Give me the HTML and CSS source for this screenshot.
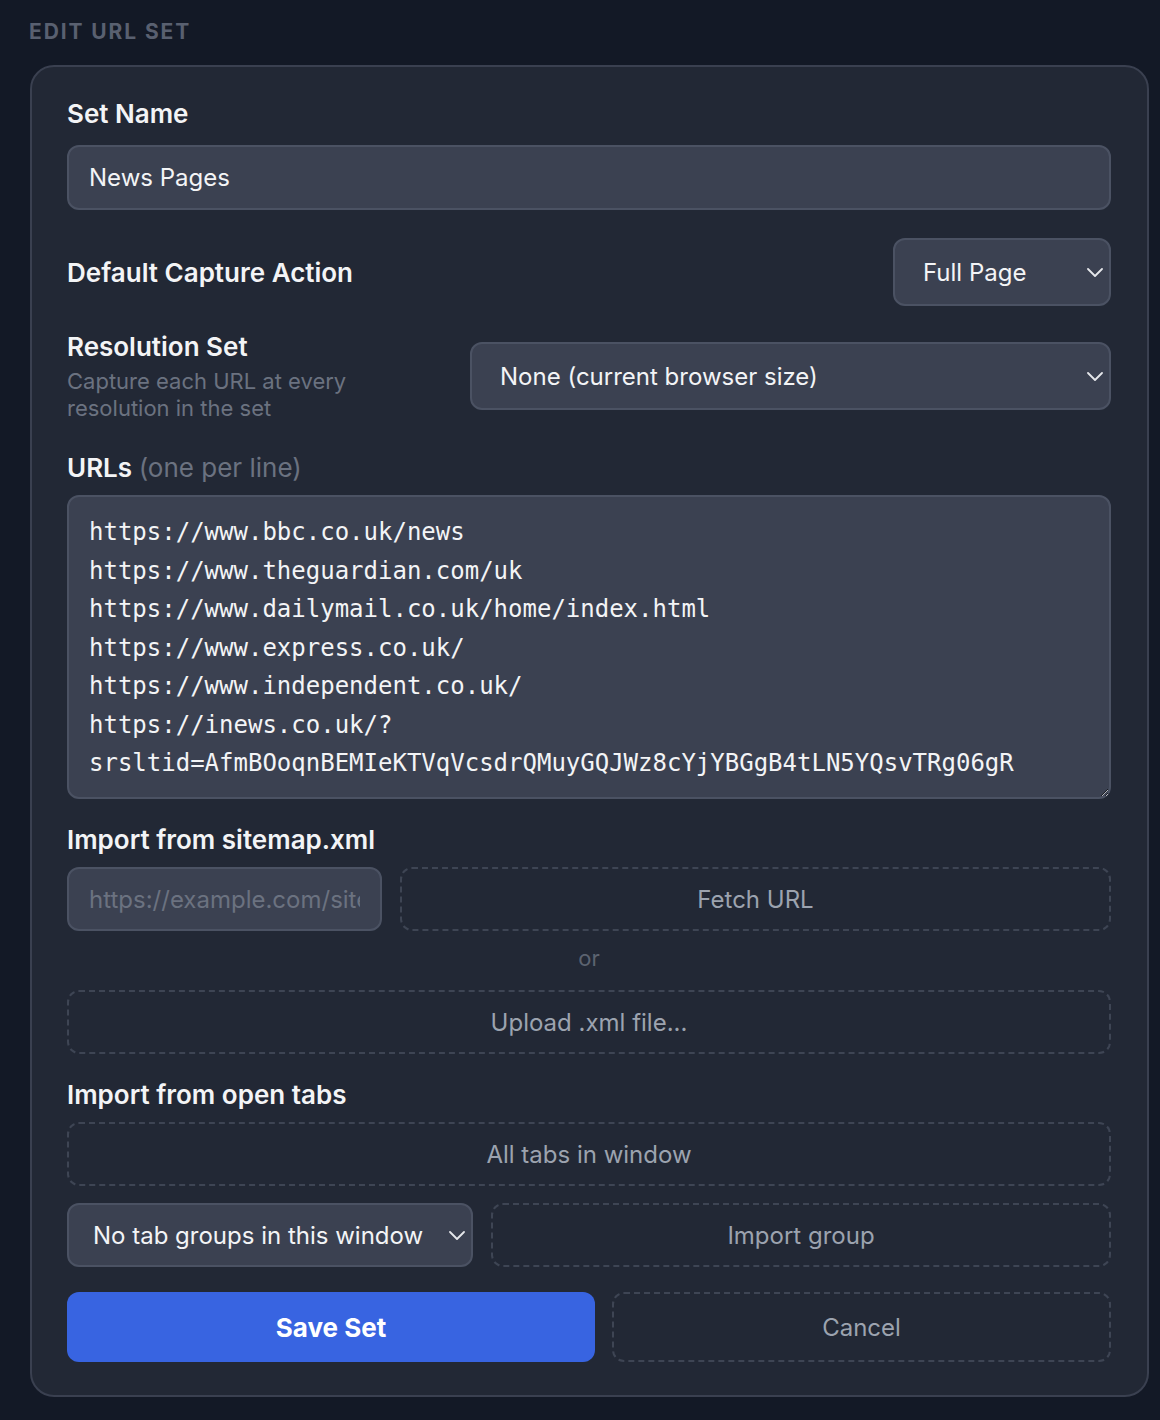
FILE: index.html
```html
<!DOCTYPE html>
<html lang="en">
<head>
    <meta charset="UTF-8">
    <meta name="viewport" content="width=device-width, initial-scale=1.0">
    <title>Edit URL Set</title>
    <link rel="stylesheet" href="styles.css">
</head>
<body>
    <h2 class="page-title">Edit URL Set</h2>

    <div class="card">
        <div class="field">
            <label class="label label-tight" for="setName">Set Name</label>
            <input class="text-input" type="text" id="setName" value="News Pages">
        </div>

        <div class="row row-capture">
            <label class="label" for="captureAction">Default Capture Action</label>
            <div class="select-wrap select-capture">
                <select id="captureAction" class="select">
                    <option>Full Page</option>
                    <option>Visible Area</option>
                </select>
                <svg class="chevron" width="16" height="9" viewBox="0 0 16 9"><path d="M1 1l7 7 7-7" fill="none" stroke="currentColor" stroke-width="1.8" stroke-linecap="round" stroke-linejoin="round"/></svg>
            </div>
        </div>

        <div class="row row-resolution">
            <div class="label-col">
                <label class="label" for="resolutionSet">Resolution Set</label>
                <p class="hint">Capture each URL at every resolution in the set</p>
            </div>
            <div class="select-wrap select-grow">
                <select id="resolutionSet" class="select">
                    <option>None (current browser size)</option>
                </select>
                <svg class="chevron" width="16" height="9" viewBox="0 0 16 9"><path d="M1 1l7 7 7-7" fill="none" stroke="currentColor" stroke-width="1.8" stroke-linecap="round" stroke-linejoin="round"/></svg>
            </div>
        </div>

        <div class="field field-urls">
            <label class="label" for="urls">URLs <span class="muted">(one per line)</span></label>
            <textarea id="urls" class="url-list" spellcheck="false">https://www.bbc.co.uk/news
https://www.theguardian.com/uk
https://www.dailymail.co.uk/home/index.html
https://www.express.co.uk/
https://www.independent.co.uk/
https://inews.co.uk/?srsltid=AfmBOoqnBEMIeKTVqVcsdrQMuyGQJWz8cYjYBGgB4tLN5YQsvTRg06gR</textarea>
        </div>

        <div class="field">
            <div class="label">Import from sitemap.xml</div>
            <div class="inline">
                <input class="text-input sitemap-input" type="text" placeholder="https://example.com/sitemap.xml">
                <button class="btn-dashed btn-grow">Fetch URL</button>
            </div>
            <div class="or">or</div>
            <button class="btn-dashed btn-block">Upload .xml file...</button>
        </div>

        <div class="field field-tabs">
            <div class="label">Import from open tabs</div>
            <button class="btn-dashed btn-block">All tabs in window</button>
            <div class="inline inline-groups">
                <div class="select-wrap select-groups">
                    <select class="select select-small-pad">
                        <option>No tab groups in this window</option>
                    </select>
                    <svg class="chevron" width="16" height="9" viewBox="0 0 16 9"><path d="M1 1l7 7 7-7" fill="none" stroke="currentColor" stroke-width="1.8" stroke-linecap="round" stroke-linejoin="round"/></svg>
                </div>
                <button class="btn-dashed btn-grow">Import group</button>
            </div>
        </div>

        <div class="actions">
            <button class="btn-primary">Save Set</button>
            <button class="btn-dashed btn-cancel">Cancel</button>
        </div>
    </div>
</body>
</html>
```

FILE: styles.css
```css
* {
    box-sizing: border-box;
}

body {
    margin: 0;
    padding: 20px 11px 0 30px;
    background-color: #131926;
    font-family: Inter, "Noto Sans", sans-serif;
    color: #f3f4f6;
}

.page-title {
    margin: 0 0 21px -1px;
    font-size: 21px;
    line-height: 24px;
    font-weight: 700;
    letter-spacing: 1.9px;
    text-transform: uppercase;
    color: #596070;
}

.card {
    background-color: #222835;
    border: 2px solid #3a4050;
    border-radius: 24px;
    padding: 30px 36px 33px 35px;
}

.label {
    display: block;
    padding-top: 1px;
    font-size: 26px;
    line-height: 32px;
    font-weight: 600;
    color: #f3f4f6;
    margin-bottom: 11px;
}

.label-tight {
    margin-bottom: 15px;
}

.muted {
    font-weight: 400;
    color: #6b7280;
}

.field {
    margin-bottom: 24px;
}

.text-input {
    display: block;
    width: 100%;
    height: 65px;
    padding: 0 20px;
    background-color: #3b4151;
    border: 2px solid #4b5263;
    border-radius: 12px;
    font-family: inherit;
    font-size: 24px;
    color: #f3f4f6;
    outline: none;
}

.text-input::placeholder {
    color: #6b7280;
}

.field:first-child {
    margin-bottom: 28px;
}

.row {
    display: flex;
    align-items: center;
    justify-content: space-between;
}

.row .label {
    margin-bottom: 0;
}

.row-capture {
    margin-bottom: 24px;
}

.row-resolution {
    gap: 23px;
    margin-bottom: 29px;
}

.label-col {
    width: 380px;
    flex-shrink: 0;
}

.row .label-col .label {
    margin-bottom: 5px;
}

.hint {
    margin: 0;
    font-size: 22px;
    line-height: 27px;
    color: #6b7280;
}

.select-wrap {
    position: relative;
}

.select-capture {
    width: 218px;
}

.select-grow {
    flex: 1;
}

.select {
    display: block;
    width: 100%;
    height: 68px;
    padding: 0 40px 0 28px;
    appearance: none;
    -webkit-appearance: none;
    background-color: #3b4151;
    border: 2px solid #4b5263;
    border-radius: 12px;
    font-family: inherit;
    font-size: 24px;
    color: #f3f4f6;
    outline: none;
}

.select-small-pad {
    height: 64px;
    padding: 0 40px 0 24px;
}

.chevron {
    position: absolute;
    right: 8px;
    top: 50%;
    margin-top: -4px;
    color: #e5e7eb;
    pointer-events: none;
}

.url-list {
    display: block;
    width: 100%;
    height: 304px;
    margin: 0;
    padding: 16px 20px 14px;
    background-color: #3b4151;
    border: 2px solid #4b5263;
    border-radius: 12px;
    font-family: "DejaVu Sans Mono", "Liberation Mono", monospace;
    font-size: 24px;
    line-height: 38.5px;
    color: #f3f4f6;
    outline: none;
    resize: vertical;
}

.inline {
    display: flex;
    gap: 18px;
}

.sitemap-input {
    width: 315px;
    flex-shrink: 0;
    height: 64px;
}

.btn-dashed {
    height: 64px;
    padding: 0 20px;
    background: transparent;
    border: 2px dashed #3e4554;
    border-radius: 12px;
    font-family: inherit;
    font-size: 24px;
    color: #9ca3af;
    cursor: pointer;
}

.btn-grow {
    flex: 1;
}

.btn-block {
    display: block;
    width: 100%;
}

.or {
    padding: 14px 0 18px;
    text-align: center;
    font-size: 22px;
    line-height: 27px;
    color: #5c6370;
}

.field-tabs .btn-block {
    margin-bottom: 17px;
}

.select-groups {
    width: 406px;
    flex-shrink: 0;
}

.field-tabs {
    margin-bottom: 25px;
}

.actions {
    display: flex;
    gap: 17px;
}

.btn-primary {
    width: 528px;
    height: 70px;
    background-color: #3864e1;
    border: none;
    border-radius: 12px;
    font-family: inherit;
    font-size: 26px;
    font-weight: 700;
    color: #ffffff;
    cursor: pointer;
}

.btn-cancel {
    flex: 1;
    height: 70px;
}
```
